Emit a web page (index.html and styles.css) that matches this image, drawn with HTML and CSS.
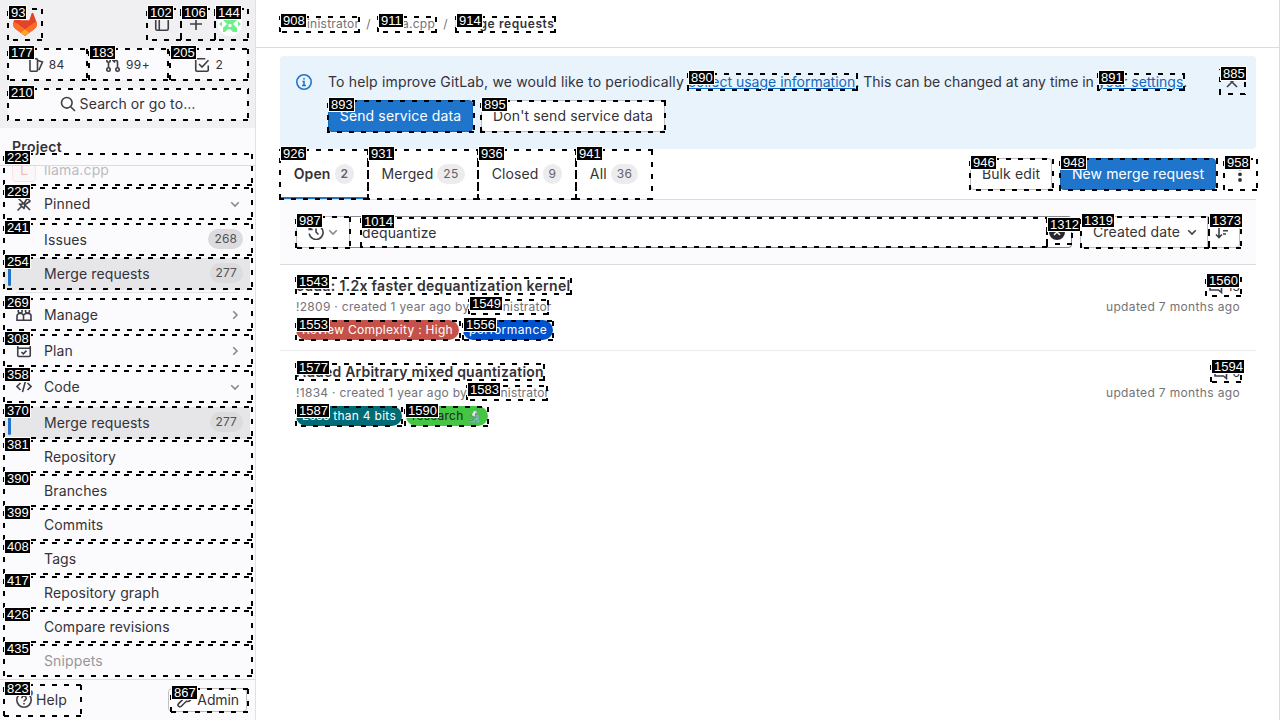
FILE: index.html
```html
<!DOCTYPE html>
<html lang="en">
<head>
<meta charset="utf-8">
<title>Merge requests</title>
<link rel="stylesheet" href="styles.css">
</head>
<body>
<div class="app">
<aside class="sidebar">
  <div class="userbar">
    <div class="brand-row">
      <svg class="logo" width="26" height="25" viewBox="0 0 26 26"><path fill="#e24329" d="M25 10.3 21.6 1.3a.9.9 0 0 0-1.7.1L17.5 8.6h-9L6.1 1.4a.9.9 0 0 0-1.7-.1L1 10.3a6.5 6.5 0 0 0 2.2 7.3L13 25l9.8-7.4a6.5 6.5 0 0 0 2.2-7.3z"/><path fill="#fc6d26" d="M25 10.3a12 12 0 0 0-4.7 2.1L13 18l4.5 3.6 5.3-4a6.5 6.5 0 0 0 2.2-7.3zM1 10.3a12 12 0 0 1 4.7 2.1L13 18l-4.5 3.6-5.3-4A6.5 6.5 0 0 1 1 10.3z"/><path fill="#fca326" d="M8.5 21.6 13 25l4.5-3.400L13 18z"/></svg>
      <span class="grow"></span>
      <span class="icon-btn"><svg class="ic" viewBox="0 0 16 16"><rect x="1.750" y="1.750" width="12.500" height="12.500" rx="1.500"/><path d="M5.250 2v12"/></svg></span>
      <span class="icon-btn"><svg class="ic" viewBox="0 0 16 16"><path d="M8 2v12M2 8h12"/></svg></span>
      <span class="icon-btn"><svg class="avatar" width="24" height="24" viewBox="0 0 24 24"><circle cx="12" cy="12" r="12" fill="#fff"/><g fill="#6bf08c"><path d="M5 4h3l4 4 4-4h3v4l-4 4 4 4v4h-4l-4-4-4 4H5v-4l4-4-4-4z"/><path d="m1 12 3-2.500v5zM23 12l-3-2.500v5z"/><path d="M9 9h6v8H9z"/></g><path d="M10.500 12h3v3h-3z" fill="#fff"/></svg></span>
    </div>
    <div class="counters">
      <span class="counter c1"><svg class="ic" viewBox="0 0 16 16"><path d="M3 1.750h5.500a1 1 0 0 1 1 1v10.500a1 1 0 0 1-1 1H3a1 1 0 0 1-1-1V2.750a1 1 0 0 1 1-1zM10 3.500l4.500 1.500-3.500 8"/></svg>84</span>
      <span class="counter c2"><svg class="ic" viewBox="0 0 16 16"><circle cx="3.500" cy="12.500" r="1.700"/><circle cx="12.500" cy="12.500" r="1.700"/><circle cx="3.500" cy="3.500" r="1.700"/><path d="M3.500 5v6M12.500 11V5a1.500 1.500 0 0 0-1.500-1.500H8.500M10 1.500 8 3.500l2 2"/></svg>99+</span>
      <span class="counter c3"><svg class="ic" viewBox="0 0 16 16"><path d="M14.250 8.500v4.750a1 1 0 0 1-1 1H2.750a1 1 0 0 1-1-1V2.750a1 1 0 0 1 1-1h8.500M5 7l3 3 6.500-6.800"/></svg>2</span>
    </div>
    <div class="search"><svg class="ic" viewBox="0 0 16 16"><circle cx="6.800" cy="6.800" r="5.300"/><path d="m10.700 10.700 4.300 4.300"/></svg>Search or go to…</div>
  </div>
  <h2 class="context">Project</h2>
  <nav class="nav">
    <div class="item project"><span class="letter">L</span><span class="name">llama.cpp</span></div>
    <div class="item pinned"><svg class="ic" viewBox="0 0 16 16"><path d="m1.500 14.500 4-4M3 7.500l5.500 5.500M4 8.500l4-1 3.500-5.500M8 12.500l1-4L14.500 5M10.500 1.500l4 4M2 2l12 12"/></svg><span class="name">Pinned</span><svg class="chev" viewBox="0 0 16 16"><path d="m4.250 6.250 3.750 3.750 3.750-3.750"/></svg></div>
    <div class="item sub"><span class="name">Issues</span><span class="pill">268</span></div>
    <div class="item sub active"><span class="name">Merge requests</span><span class="pill">277</span></div>
    <hr class="rule">
    <div class="item sec"><svg class="ic" viewBox="0 0 16 16"><circle cx="4.200" cy="4" r="2"/><circle cx="11.500" cy="4" r="2"/><path d="M1 13.250V9a2.500 2.500 0 0 1 2.500-2.500h1.200A2.500 2.500 0 0 1 7.500 9v4.250zM7.500 13.250H15V9a2.500 2.500 0 0 0-2.500-2.500h-2A2.500 2.500 0 0 0 8 8"/></svg><span class="name">Manage</span><svg class="chev" viewBox="0 0 16 16"><path d="m6.250 4.250 3.750 3.750-3.750 3.750"/></svg></div>
    <div class="item sec"><svg class="ic" viewBox="0 0 16 16"><rect x="1.750" y="2" width="12.500" height="11.500" rx="1"/><path d="M2 5.250h12M5.500 9l1.800 1.800 3.200-3.200"/></svg><span class="name">Plan</span><svg class="chev" viewBox="0 0 16 16"><path d="m6.250 4.250 3.750 3.750-3.750 3.750"/></svg></div>
    <div class="item sec"><svg class="ic" viewBox="0 0 16 16"><path d="M4.500 4 1 7.500 4.500 11M11.500 4 15 7.500 11.500 11M9.500 2l-3 11"/></svg><span class="name">Code</span><svg class="chev" viewBox="0 0 16 16"><path d="m4.250 6.250 3.750 3.750 3.750-3.750"/></svg></div>
    <div class="item sub active"><span class="name">Merge requests</span><span class="pill">277</span></div>
    <div class="item sub"><span class="name">Repository</span></div>
    <div class="item sub"><span class="name">Branches</span></div>
    <div class="item sub"><span class="name">Commits</span></div>
    <div class="item sub"><span class="name">Tags</span></div>
    <div class="item sub"><span class="name">Repository graph</span></div>
    <div class="item sub"><span class="name">Compare revisions</span></div>
    <div class="item sub faded"><span class="name">Snippets</span></div>
  </nav>
  <div class="side-foot">
    <span class="help"><svg class="ic" viewBox="0 0 16 16"><circle cx="8" cy="8" r="7.200"/><path d="M5.800 6.200a2.200 2.200 0 1 1 3.400 1.800C8.400 8.500 8 8.700 8 9.600M8 11v1.500"/></svg>Help<i class="dot"></i></span>
    <span class="admin"><svg class="ic" viewBox="0 0 16 16"><path d="M14.300 4.500 12 6.500 9.500 4l2-2.300a4 4 0 0 0-5 5L1.600 11.600a1.800 1.800 0 0 0 2.700 2.700l5-5a4 4 0 0 0 5-4.800z"/></svg>Admin</span>
  </div>
</aside>
<main class="main">
  <header class="crumbs"><span class="k1">Administrator</span><i>/</i><span class="k2">llama.cpp</span><i>/</i><b>Merge requests</b></header>
  <section class="alert">
    <svg class="ic info" viewBox="0 0 16 16"><circle cx="8" cy="8" r="7.200"/><path d="M6.500 7.500H8v4M6 11.500h4M8 4v1.500"/></svg>
    <div class="alert-body">
      <p><span class="lead">To help improve GitLab, we would like to periodically </span><a>collect usage information</a>. This can be changed at any time in <a>your settings</a>.</p>
      <div class="actions"><span class="btn primary send">Send service data</span><span class="btn dont">Don't send service data</span></div>
    </div>
    <svg class="ic close" viewBox="0 0 16 16"><path d="m3 3 10 10M13 3 3 13"/></svg>
  </section>
  <div class="tabs">
    <span class="tab on t1">Open<em>2</em></span><span class="tab t2">Merged<em>25</em></span><span class="tab t3">Closed<em>9</em></span><span class="tab t4">All<em>36</em></span>
    <span class="grow"></span>
    <span class="btn bulk">Bulk edit</span><span class="btn primary new">New merge request</span>
    <span class="more"><svg width="16" height="16" viewBox="0 0 16 16" fill="#333238"><circle cx="8" cy="2.500" r="1.900"/><circle cx="8" cy="8.300" r="1.900"/><circle cx="8" cy="14" r="1.900"/></svg></span>
  </div>
  <div class="filter">
    <span class="history"><svg class="ic" viewBox="0 0 16 16"><path d="M1.200 2v3.500h3.500M2 5a7 7 0 1 1-.8 4.500M8 4.500V8l2.500 2.500"/></svg><svg class="chev" viewBox="0 0 16 16"><path d="m4.250 6.250 3.750 3.750 3.750-3.750"/></svg></span>
    <span class="field"><span class="query">dequantize</span><svg class="clear" width="16" height="16" viewBox="0 0 16 16"><circle cx="8" cy="8" r="8" fill="#28272d"/><path d="m5 5 6 6M11 5l-6 6" stroke="#fff" stroke-width="1.500"/></svg></span>
    <span class="btn sort">Created date<svg class="chev dark" viewBox="0 0 16 16"><path d="m4.250 6.250 3.750 3.750 3.750-3.750"/></svg></span>
    <span class="btn dir"><svg class="ic" viewBox="0 0 16 16"><path d="M4 2v11M1 10.500l3 3 3-3M8 3.250h7M8 6.750h5M8 10h3"/></svg></span>
  </div>
  <article class="mr">
    <div class="mr-main"><h3 class="a">cuda: 1.2x faster dequantization kernel</h3><p>!2809 · created 1 year ago by <span class="author">Administrator</span></p>
      <div class="labels"><span class="label red">Review Complexity : High</span><span class="label blue">performance</span></div></div>
    <div class="mr-side"><span class="notes"><svg class="ic" viewBox="0 0 16 16"><path d="M2 2.500h11.500v11L10.500 11H2z"/></svg>13</span><time>updated 7 months ago</time></div>
  </article>
  <article class="mr last">
    <div class="mr-main"><h3 class="b">Added Arbitrary mixed quantization</h3><p>!1834 · created 1 year ago by <span class="author">Administrator</span></p>
      <div class="labels"><span class="label teal">Less than 4 bits</span><span class="label green">research 🔬</span></div></div>
    <div class="mr-side"><span class="notes"><svg class="ic" viewBox="0 0 16 16"><path d="M2 2.500h11.500v11L10.500 11H2z"/></svg>6</span><time>updated 7 months ago</time></div>
  </article>
</main>
</div>
<div class="marks" id="marks"></div>
<script src="marks.js"></script>
</body>
</html>
```

FILE: styles.css
```css
* { box-sizing: border-box; }
body { margin: 0; font: 14px/20px Inter, "Noto Sans", sans-serif; letter-spacing: .12px; color: #333238; background: #fff; overflow: hidden; }
p, h2, h3 { margin: 0; }
i, em { font-style: normal; }
.app { display: flex; width: 1280px; height: 720px; }
.grow { flex: 1; }
.ic, .chev { width: 16px; height: 16px; flex: none; fill: none; stroke: #3f3e46; stroke-width: 1.6; }
.chev { stroke: #89888d; }
.chev.dark { stroke: #3f3e46; }
.sidebar { width: 256px; display: flex; flex-direction: column; background: #fbfafd; border-right: 1px solid #e1e1e5; }
.userbar { height: 128px; flex: none; background: #f0f0f3; padding: 8px; display: flex; flex-direction: column; gap: 8px; }
.brand-row { display: flex; align-items: center; height: 32px; padding-left: 4px; }
.icon-btn { width: 34px; display: flex; justify-content: center; }
.counters { display: flex; gap: 2px; }
.counter, .search { display: flex; align-items: center; justify-content: center; height: 32px; background: #fbfafd; border-radius: 4px; }
.counter { width: 79px; gap: 5px; font-size: 12px; letter-spacing: .4px; padding-top: 1px; }
.c1 { padding-right: 2px; }
.c3 { padding-left: 2px; }
.search { gap: 4px; }
.context { height: 38px; flex: none; border-bottom: 1px solid #dcdcde; font-size: 14px; line-height: 20px; padding: 9px 12px; font-weight: 600; letter-spacing: .3px; }
.nav { flex: 1; overflow: hidden; padding: 0 4px; }
.item { display: flex; align-items: center; height: 32px; padding: 0 8px 0 12px; }
.item .name { flex: 1; }
.item > .ic { margin-right: 12px; }
.project { margin-top: -12px; padding-left: 8px; opacity: .32; }
.letter { width: 24px; height: 24px; margin-right: 8px; border: 1px solid #f0b9b2; border-radius: 4px; background: #fcf1ef; color: #c24b38; text-align: center; line-height: 22px; }
.pinned { margin-top: 2px; }
.sub { padding-left: 40px; margin-bottom: 2px; }
.pinned + .sub { margin-top: 4px; }
.active { background: #e6e6e9; position: relative; border-radius: 4px; margin-right: 1px; padding-right: 7px; }
.active::before { content: ""; position: absolute; left: 4px; top: 4px; width: 3px; height: 24px; border-radius: 2px; background: #1f75cb; }
.pill { background: #dcdcde; color: #535158; font-size: 12px; line-height: 20px; height: 20px; padding: 0 6px; border-radius: 10px; margin-top: -2px; }
.rule { border: 0; height: 1px; background: #e4e4e8; margin: 1px 12px 5px; }
.rule + .sec { margin-top: 6px; }
.sec { margin-bottom: 4px; }
.faded { opacity: .5; }
.side-foot { height: 41px; flex: none; border-top: 1px solid #dcdcde; display: flex; align-items: center; justify-content: space-between; padding: 0 8px 0 16px; }
.help, .admin { display: flex; align-items: center; gap: 4px; position: relative; }
.dot { position: absolute; left: 11px; top: 0; width: 6px; height: 6px; border-radius: 50%; background: #1f75cb; }
.admin { height: 24px; border: 1px solid #bfbfc3; border-radius: 4px; padding: 0 7px 0 8px; background: #fff; letter-spacing: -.1px; }
.main { flex: 1; border-right: 1px solid #dcdcde; padding-right: 23px; }
.crumbs { height: 48px; border-bottom: 1px solid #dcdcde; margin-right: -23px; padding-left: 24px; display: flex; align-items: center; font-size: 12px; color: #737278; letter-spacing: .25px; }
.crumbs i { width: 19px; text-align: center; }
.k1 { width: 79px; }
.k2 { width: 58px; }
.crumbs b { font-weight: 600; color: #333238; letter-spacing: .6px; }
.alert { margin: 8px 0 0 24px; height: 93px; padding: 16px; display: flex; background: #e9f3fc; border-radius: 4px; }
.info { stroke: #1f75cb; margin-top: 2px; margin-right: 16px; }
.alert-body { flex: 1; }
.alert p { letter-spacing: 0; }
.lead { letter-spacing: .165px; }
.alert a { color: #1068bf; text-decoration: underline; }
.close { margin-top: 2px; }
.actions { display: flex; gap: 8px; margin-top: 8px; }
.btn { display: flex; align-items: center; justify-content: center; height: 32px; border: 1px solid #bfbfc3; border-radius: 4px; background: #fff; white-space: nowrap; }
.primary { background: #1f75cb; border-color: #1068bf; color: #fff; }
.send { width: 145px; }
.dont { width: 184px; }
.tabs { margin-left: 24px; height: 51px; border-bottom: 1px solid #dcdcde; display: flex; align-items: center; }
.tab { height: 50px; display: flex; align-items: center; justify-content: center; gap: 4px; }
.tab em { background: #ececef; color: #626168; font-size: 12px; line-height: 20px; padding: 0 6px; border-radius: 10px; letter-spacing: .3px; }
.on { font-weight: 600; box-shadow: inset 0 -2px #1f75cb; }
.t1 { width: 88px; } .t2 { width: 110px; } .t3 { width: 98px; } .t4 { width: 76px; }
.bulk { width: 82px; margin-right: 8px; }
.new { width: 156px; margin-right: 8px; }
.more { width: 32px; display: flex; justify-content: center; }
.filter { margin-left: 24px; height: 65px; background: #fbfafd; border-bottom: 1px solid #dcdcde; padding: 0 16px; display: flex; align-items: center; }
.history { width: 54px; height: 32px; border: 1px solid #bfbfc3; border-radius: 4px 0 0 4px; display: flex; align-items: center; justify-content: center; background: #fff; gap: 1px; padding-left: 2px; }
.field { flex: 1; height: 32px; border: 1px solid #89888d; border-left: 0; border-radius: 0 4px 4px 0; background: #fff; padding: 0 6px 0 12px; display: flex; align-items: center; justify-content: space-between; margin-right: 8px; }
.query { padding-top: 2px; }
.sort { width: 128px; border-radius: 4px 0 0 4px; gap: 4px; padding-left: 5px; }
.dir { width: 33px; margin-left: -1px; border-radius: 0 4px 4px 0; padding-right: 1px; }
.mr { margin-left: 24px; height: 86px; border-bottom: 1px solid #ececef; padding: 11px 16px 0; display: flex; justify-content: space-between; }
.last { border: 0; }
.mr h3 { font-size: 14px; line-height: 20px; font-weight: 600; white-space: nowrap; }
.mr .a { letter-spacing: .32px; }
.mr .b { letter-spacing: .2px; }
.mr p, .mr time { font-size: 12px; line-height: 16px; color: #737278; margin-top: 3px; white-space: nowrap; letter-spacing: .29px; }
.mr .author { letter-spacing: .18px; }
.mr time { letter-spacing: .35px; }
.labels { display: flex; gap: 4px; margin-top: 5px; }
.label { height: 20px; line-height: 20px; border-radius: 10px; padding: 0 6px; font-size: 12px; color: #fff; white-space: nowrap; letter-spacing: .28px; }
.red { background: #c4524a; } .blue { background: #0052cc; letter-spacing: .45px; } .teal { background: #006b75; } .green { background: #44c544; color: #1f1e24; letter-spacing: .2px; }
.mr-side { display: flex; flex-direction: column; align-items: flex-end; }
.notes { display: flex; align-items: center; gap: 3px; height: 20px; padding-top: 2px; font-size: 12px; }
.marks { position: absolute; inset: 0; pointer-events: none; letter-spacing: 0; }
.mark {
  --dash: transparent 0 1px, #000 1px 6px, transparent 6px 12px;
  position: absolute;
  background:
    repeating-linear-gradient(90deg, var(--dash)) top / 100% 2px no-repeat,
    repeating-linear-gradient(270deg, var(--dash)) bottom / 100% 2px no-repeat,
    repeating-linear-gradient(0deg, var(--dash)) left / 2px 100% no-repeat,
    repeating-linear-gradient(180deg, var(--dash)) right / 2px 100% no-repeat;
}
.mark b { position: absolute; left: 1px; top: -3px; background: #000; color: #fff; border: 1px solid #fff; font: 13px/13px "Liberation Sans", Arial, sans-serif; height: 15px; padding: 0 1px 0 2px; }
```

FILE: marks.js
```js
// id, left, top, right, bottom
const marks = [
  [93,7,8,43,41],[102,146,8,182,41],[106,180,8,216,41],[144,214,8,249,41],
  [177,7,48,88,81],[183,88,48,169,81],[205,169,48,249,81],[210,7,88,249,121],
  [223,3,153,253,186],[229,3,187,253,220],[241,3,223,253,256],[254,3,257,253,290],
  [269,3,298,253,331],[308,3,334,253,367],[358,3,370,253,403],[370,3,406,253,439],
  [381,3,440,253,473],[390,3,474,253,507],[399,3,508,253,541],[408,3,542,253,575],
  [417,3,576,253,609],[426,3,610,253,643],[435,3,644,253,677],
  [823,3,684,82,717],[867,170,688,249,713],
  [908,279,16,360,33],[911,377,16,437,33],[914,455,16,556,33],
  [890,687,73,858,91],[891,1097,73,1185,91],[885,1219,69,1246,95],
  [893,327,100,475,133],[895,480,100,666,133],
  [926,279,149,369,200],[931,367,149,479,200],[936,477,149,577,200],[941,575,149,653,200],
  [946,969,158,1054,191],[948,1059,158,1218,191],[958,1223,158,1258,191],
  [987,295,216,351,249],[1014,360,217,1048,248],[1312,1046,220,1073,245],
  [1319,1080,216,1210,249],[1373,1208,216,1242,249],
  [1543,295,277,572,295],[1549,468,299,549,315],[1553,295,320,461,341],[1556,462,320,554,341],[1560,1205,276,1242,297],
  [1577,295,363,545,381],[1583,466,385,548,401],[1587,295,406,403,427],[1590,404,406,489,427],[1594,1210,362,1242,383]
];
const layer = document.getElementById("marks");
for (const [id, l, t, r, b] of marks) {
  const box = document.createElement("div");
  box.className = "mark";
  box.style.cssText = `left:${l}px;top:${t}px;width:${r - l}px;height:${b - t}px`;
  const tag = document.createElement("b");
  tag.textContent = id;
  box.append(tag);
  layer.append(box);
}
```
